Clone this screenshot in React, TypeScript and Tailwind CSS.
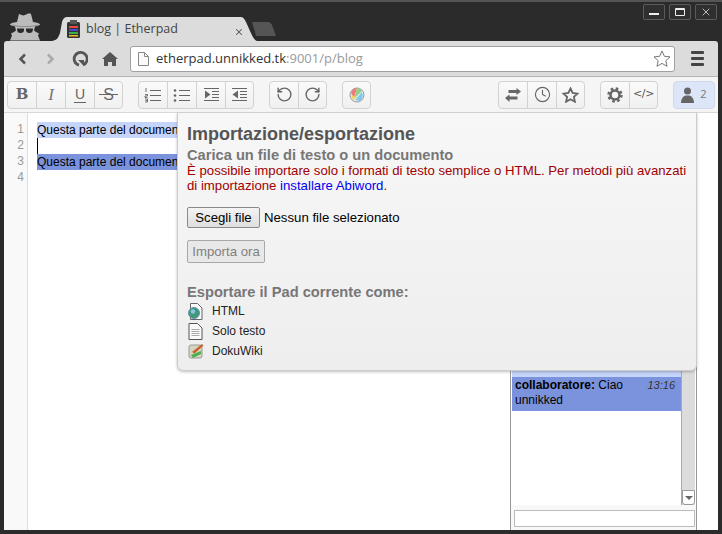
import { ReactNode } from "react";
import { RotateCcw, RotateCw, Clock, X } from "lucide-react";

const sans = "font-['Liberation_Sans',Arial,sans-serif]";

function ToolButton({ children, last }: { children: ReactNode; last?: boolean }) {
  return (
    <div
      className={`flex items-center justify-center h-full text-[#666] ${
        last ? "w-[27px]" : "w-[29px] border-r border-[#d2d2d2]"
      }`}
    >
      {children}
    </div>
  );
}

function ToolGroup({ children }: { children: ReactNode }) {
  return (
    <div className="flex h-[28px] rounded-[4px] border border-[#d2d2d2] bg-gradient-to-b from-[#fafafa] to-[#f0f0f0]">
      {children}
    </div>
  );
}

function ListIcon({ numbered }: { numbered?: boolean }) {
  return (
    <svg width="18" height="16" viewBox="0 0 18 16" fill="none" stroke="#666" strokeWidth="1">
      <path d="M6 3.500h11M6 8.500h11M6 13.500h11" />
      {numbered ? (
        <path d="M2 1v4M1 7.500h2.500v1.500h-2.500v1.500h2.500M1 12h2.500v3h-2.500M1.500 13.500h2" strokeWidth="0.9" />
      ) : (
        <g fill="#666" stroke="none">
          <circle cx="2" cy="3.500" r="1.300" />
          <circle cx="2" cy="8.500" r="1.300" />
          <circle cx="2" cy="13.500" r="1.300" />
        </g>
      )}
    </svg>
  );
}

function IndentIcon({ out }: { out?: boolean }) {
  return (
    <svg width="15" height="13" viewBox="0 0 15 13" fill="none" stroke="#666" strokeWidth="1">
      <path d="M0 .5h15M0 12.500h15M8 3.500h7M8 6.500h7M8 9.500h7" />
      <path d={out ? "M6 2.500v8l-5.500-4z" : "M1 2.500v8l5.500-4z"} fill="#666" stroke="none" />
    </svg>
  );
}

function FileIcon() {
  return (
    <svg width="11" height="14" viewBox="0 0 11 14" fill="#fafafa" stroke="#888" strokeWidth="1">
      <path d="M.5 .5h6l4 4v9h-10z" />
      <path d="M6.500 .5v4h4" fill="none" />
    </svg>
  );
}

function IncognitoIcon() {
  return (
    <svg width="34" height="28" viewBox="0 0 34 28" className="mt-[11px] ml-[4px] shrink-0">
      <path d="M9 9l2-8c3 1 4 2 6 1s4-2 6-1l2 8c4 .5 7 1.500 7 2.500 0 .8-2 1.500-5 2l-1 4c1 1 3 2 5 3l-1 2 2 5h-30l2-5-1-2c2-1 4-2 5-3l-1-4c-3-.5-5-1.200-5-2 0-1 3-2 7-2.500z" fill="#bcbcbc" />
      <path d="M9 15.500h7c.5 3-1 4.500-3.500 4.500s-3.500-1.500-3.500-4.500zM18 15.500h7c0 3-1 4.500-3.500 4.500s-4-1.500-3.500-4.500z" fill="#2b2b2b" />
      <path d="M4 11.500c8 2 18 2 26 0v1c-8 2-18 2-26 0z" fill="#8c8c8c" />
    </svg>
  );
}

function Tab() {
  return (
    <div className="relative w-[208px] h-[24px] flex items-center pl-[17px] mt-[15px] shrink-0">
      <svg width="208" height="24" viewBox="0 0 208 24" className="absolute left-0 top-0">
        <path d="M0 24c6 0 8-2 10-8l2-11c1-3 2-5 6-5h172c3 0 4 1 6 5l4 9c3 7 5 10 8 10z" fill="#dcdcdc" />
      </svg>
      <svg width="13" height="18" viewBox="0 0 13 18" className="relative mr-[6px]">
        <rect x="0" y="2" width="13" height="16" rx="1.500" fill="#333" />
        <rect x="3" y="0" width="7" height="4" fill="#555" />
        <rect x="2" y="6" width="9" height="2" fill="#e44" />
        <rect x="2" y="9" width="9" height="2" fill="#4a4ad0" />
        <rect x="2" y="12" width="9" height="2" fill="#3ab04a" />
        <rect x="2" y="15" width="9" height="1.500" fill="#e6c020" />
      </svg>
      <span className="relative text-[12.500px] text-[#444] font-['Open_Sans',sans-serif]">blog | Etherpad</span>
      <X size={10} strokeWidth={2.500} className="absolute left-[184px] top-[10px] text-[#555]" />
    </div>
  );
}

function WindowButton({ children }: { children: ReactNode }) {
  return (
    <div className="flex items-center justify-center w-[22px] h-[16px] rounded-[2px] border border-[#5c5c5c] bg-[#2f2f2f] text-[#eee]">
      {children}
    </div>
  );
}

function ExportRow({ icon, label }: { icon: ReactNode; label: string }) {
  return (
    <div className="flex items-center h-[20px]">
      <div className="w-[25px] flex justify-start shrink-0">{icon}</div>
      <span className="text-[12px] text-[#222]">{label}</span>
    </div>
  );
}

function ImportExportPopup() {
  return (
    <div className="absolute left-[173px] top-0 w-[520px] h-[258px] bg-gradient-to-b from-[#f7f7f7] to-[#eeeeee] border-x border-b border-[#cccccc] rounded-b-[6px] shadow-[0_1px_3px_rgba(0,0,0,.25)] pl-[9px] pt-[10px]">
      <h1 className="text-[18px] leading-[22px] font-bold text-[#555]">Importazione/esportazione</h1>
      <h2 className="text-[14.670px] leading-[18px] mt-[1px] font-bold text-[#777]">Carica un file di testo o un documento</h2>
      <p className="text-[13.200px] leading-[14.500px] text-[#a00000] whitespace-nowrap">
        È possibile importare solo i formati di testo semplice o HTML. Per metodi più avanzati
        <br />
        di importazione <span className="text-[#0000ee]">installare Abiword</span>.
      </p>
      <div className="flex items-center mt-[14px] text-[13.200px] text-black">
        <div className="flex items-center justify-center w-[73px] h-[21px] rounded-[2px] border border-[#8a8a8a] bg-gradient-to-b from-[#f4f4f4] to-[#dedede]">
          Scegli file
        </div>
        <span className="ml-[4px]">Nessun file selezionato</span>
      </div>
      <div className="flex items-center justify-center mt-[12px] w-[78px] h-[23px] rounded-[2px] border border-[#a8a8a8] bg-[#e8e8e8] text-[13.200px] text-[#808080]">
        Importa ora
      </div>
      <h2 className="text-[14.670px] leading-[18px] mt-[20px] font-bold text-[#777]">Esportare il Pad corrente come:</h2>
      <ExportRow
        icon={
          <svg width="16" height="17" viewBox="0 0 16 17" fill="#fafafa" stroke="#666">
            <path d="M3.500 .5h7l4.500 4.500v11.500h-11.500z" />
            <circle cx="7" cy="10" r="5.500" fill="#3f9a78" stroke="#6a8fb0" />
            <circle cx="6" cy="8.500" r="2.200" fill="#8fc6e8" stroke="none" />
          </svg>
        }
        label="HTML"
      />
      <ExportRow
        icon={
          <svg width="15" height="17" viewBox="0 0 15 17" fill="#fafafa" stroke="#555" className="ml-[1px]">
            <path d="M1 .5h8.500l4.500 4.500v11.500h-13z" />
            <path d="M3.500 6.500h8M3.500 8.500h8M3.500 10.500h8M3.500 12.500h8" stroke="#aaa" />
          </svg>
        }
        label="Solo testo"
      />
      <ExportRow
        icon={
          <svg width="17" height="16" viewBox="0 0 17 16" className="ml-[1px]">
            <rect x="1" y="2" width="13" height="13" rx="2" fill="#d8d4c0" stroke="#999" />
            <path d="M3 12l10-4v3l-8 4z" fill="#4caf50" />
            <path d="M4 9l10-8 1.500 1.500-9 8z" fill="#c8602c" />
          </svg>
        }
        label="DokuWiki"
      />
    </div>
  );
}

export default function App() {
  return (
    <div className={`relative w-[722px] h-[534px] overflow-hidden bg-[#2b2b2b] border-t-2 border-[#555] flex flex-col px-[4px] pb-[4px] ${sans}`}>
      {/* title strip */}
      <div className="flex h-[39px] shrink-0">
        <IncognitoIcon />
        <div className="w-[8px] shrink-0" />
        <Tab />
        <svg width="24" height="14" viewBox="0 0 24 14" className="mt-[20px] ml-[-6px] shrink-0">
          <path d="M0 0h16c2 0 3 1 4 3l4 11h-20c-1-5-3-10-4-14z" fill="#555" />
        </svg>
        <div className="ml-auto flex gap-[4px] mt-[2px] mr-[1px] h-[16px]">
          <WindowButton>
            <div className="w-[10px] h-[2px] bg-[#eee] mt-[3px]" />
          </WindowButton>
          <WindowButton>
            <div className="w-[10px] h-[8px] border border-[#eee] border-t-2 rounded-[1px]" />
          </WindowButton>
          <WindowButton>
            <X size={12} strokeWidth={1.500} />
          </WindowButton>
        </div>
      </div>

      {/* browser toolbar */}
      <div className="flex items-center h-[36px] shrink-0 bg-[#dcdcdc] rounded-t-[3px] border-b border-[#b4b4b4]">
        <svg width="10" height="12" viewBox="0 0 10 12" className="ml-[14px]" fill="none" stroke="#555" strokeWidth="2.500">
          <path d="M7 1.500l-4.500 4.500 4.500 4.500" />
        </svg>
        <svg width="10" height="12" viewBox="0 0 10 12" className="ml-[17px]" fill="none" stroke="#aaa" strokeWidth="2.500">
          <path d="M3 1.500l4.500 4.500-4.500 4.500" />
        </svg>
        <svg width="16" height="16" viewBox="0 0 16 16" className="ml-[17px]" fill="none" stroke="#555" strokeWidth="2.800">
          <path d="M11 14a6.500 6.500 0 1 0-4 .2" />
          <path d="M6 9l6 0 0 6z" fill="#555" stroke="none" />
        </svg>
        <svg width="16" height="14" viewBox="0 0 16 14" className="ml-[14px]" fill="#555">
          <path d="M8 0l8 7h-2v7h-4v-4h-4v4h-4v-7h-2z" />
        </svg>
        <div className="flex items-center w-[545px] h-[26px] ml-[12px] rounded-[3px] border border-[#a0a0a0] bg-white">
          <div className="ml-[7px] mr-[7px] flex">
            <FileIcon />
          </div>
          <span className="text-[13px] font-['Open_Sans',sans-serif] text-[#333] whitespace-nowrap">
            etherpad.unnikked.tk<span className="text-[#999]">:9001/p/blog</span>
          </span>
          <svg width="18" height="17" viewBox="0 0 18 17" className="ml-auto mr-[3px]" fill="#fff" stroke="#777">
            <path d="M9 1l2.400 5.300 5.600.6-4.200 3.800 1.200 5.600-5-2.900-5 2.900 1.200-5.600-4.200-3.800 5.600-.6z" />
          </svg>
        </div>
        <div className="ml-[16px] flex flex-col gap-[3px]">
          <div className="w-[13px] h-[3px] bg-[#444] rounded-[1px]" />
          <div className="w-[13px] h-[3px] bg-[#444] rounded-[1px]" />
          <div className="w-[13px] h-[3px] bg-[#444] rounded-[1px]" />
        </div>
      </div>

      {/* etherpad toolbar */}
      <div className="flex items-center gap-[15px] h-[36px] shrink-0 bg-[#f5f5f5] border-b border-[#d8d8d8] pl-[3px] pr-[3px]">
        <ToolGroup>
          <ToolButton><span className="font-['DejaVu_Serif',serif] font-bold text-[15px]">B</span></ToolButton>
          <ToolButton><span className="font-['Liberation_Serif',serif] italic text-[17px] text-[#777]">I</span></ToolButton>
          <ToolButton>
            <span className="font-['Liberation_Sans',sans-serif] text-[14px] leading-[15px] px-[1px] border-b border-[#666]">U</span>
          </ToolButton>
          <ToolButton last>
            <span className="relative font-['Liberation_Sans',sans-serif] text-[16px]">
              S
              <span className="absolute left-[-4px] right-[-4px] top-[11px] h-px bg-[#666]" />
            </span>
          </ToolButton>
        </ToolGroup>
        <ToolGroup>
          <ToolButton><ListIcon numbered /></ToolButton>
          <ToolButton><ListIcon /></ToolButton>
          <ToolButton><IndentIcon /></ToolButton>
          <ToolButton last><IndentIcon out /></ToolButton>
        </ToolGroup>
        <ToolGroup>
          <ToolButton><RotateCcw size={17} strokeWidth={2} /></ToolButton>
          <ToolButton last><RotateCw size={17} strokeWidth={2} /></ToolButton>
        </ToolGroup>
        <ToolGroup>
          <ToolButton last>
            <svg width="16" height="16" viewBox="0 0 16 16">
              <circle cx="8" cy="8" r="7" fill="#eee" stroke="#999" />
              <path d="M2 6a6.500 6.500 0 0 1 6-5l-3 10z" fill="#ef7a7a" />
              <path d="M8 1a7 7 0 0 1 5 3l-8 8z" fill="#8fd08f" />
              <path d="M13 5a7 7 0 0 1-2 9l-5-1z" fill="#7fc8ee" />
              <path d="M2 8a6 6 0 0 0 3 5l2-3z" fill="#f2d65c" />
            </svg>
          </ToolButton>
        </ToolGroup>
        <div className="flex-1" />
        <ToolGroup>
          <ToolButton>
            <svg width="16" height="14" viewBox="0 0 16 14" fill="#666">
              <path d="M16 3.500l-4.500-3.500v2h-8v3h8v2zM0 10l4.500-3.500v2h8v3h-8v2.500z" />
            </svg>
          </ToolButton>
          <ToolButton><Clock size={17} strokeWidth={1.600} /></ToolButton>
          <ToolButton last>
            <svg width="17" height="16" viewBox="0 0 17 16" fill="none" stroke="#666" strokeWidth="1.800">
              <path d="M8.500 1.500l2.100 4.500 4.900.6-3.600 3.300 1 4.800-4.400-2.500-4.400 2.500 1-4.800-3.600-3.300 4.900-.6z" />
            </svg>
          </ToolButton>
        </ToolGroup>
        <ToolGroup>
          <ToolButton>
            <svg width="16" height="16" viewBox="0 0 16 16" fill="none" stroke="#666">
              <circle cx="8" cy="8" r="4.500" strokeWidth="2.600" />
              <circle cx="8" cy="8" r="6.500" strokeWidth="2.400" strokeDasharray="2.550 2.550" />
            </svg>
          </ToolButton>
          <ToolButton last>
            <span className="text-[11px] text-[#555] font-['DejaVu_Sans',sans-serif] tracking-[-.03em]">&lt;/&gt;</span>
          </ToolButton>
        </ToolGroup>
        <div className="flex items-center gap-[6px] justify-center w-[42px] h-[28px] rounded-[4px] border border-[#d0d8ec] bg-[#dde5f8] text-[#666]">
          <svg width="13" height="16" viewBox="0 0 13 16" fill="#666">
            <circle cx="6.500" cy="4" r="3.500" />
            <path d="M0 16c0-4 2-7 5-7.500h3c3 .5 5 3.500 5 7.500z" />
          </svg>
          <span className="text-[11px] text-[#777] font-['Open_Sans',sans-serif]">2</span>
        </div>
      </div>

      {/* editor + chat */}
      <div className="relative flex flex-1 min-h-0 bg-white">
        <div className="w-[24px] shrink-0 border-r border-[#dddddd] pt-[8px] bg-[#f9f9f9] text-[12px] leading-[16px] text-[#999] text-right pr-[3px]">
          <div>1</div>
          <div>2</div>
          <div>3</div>
          <div>4</div>
        </div>
        <div className="flex-1 min-w-0 pt-[9px] pl-[9px] text-[12px] leading-[16px] text-black whitespace-nowrap">
          {/* the popup covers the rest of these lines, so they stop at its edge */}
          <div className="w-[140px] overflow-hidden bg-[#c5d4fb]">Questa parte del documento</div>
          <div className="w-px h-[16px] bg-black" />
          <div className="w-[140px] overflow-hidden bg-[#7b92dc]">Questa parte del documento</div>
        </div>

        {/* chat */}
        <div className="w-[187px] shrink-0 border-x border-[#999] mr-[21px] flex flex-col">
          <div className="flex flex-1 min-h-0">
            <div className="flex-1 min-w-0 pl-[1px] flex flex-col justify-end">
              <div className="h-[7px] bg-[#c5d4fb]" />
              <div className="h-[34px] bg-[#7b92dc] px-[3px] pt-[1px] text-[12px] leading-[15px] text-black relative">
                <b>collaboratore:</b> Ciao
                <br />
                unnikked
                <span className="absolute right-[6px] top-[1px] italic text-[11px] text-[#333]">13:16</span>
              </div>
              <div className="h-[94px]" />
            </div>
            <div className="w-[14px] shrink-0 mr-[1px] bg-[#dcdcdc] border-l border-[#aaa] flex flex-col justify-end">
              <div className="h-[15px] bg-white border border-[#999] rounded-b-[3px] flex items-center justify-center">
                <div className="w-0 h-0 border-x-[4px] border-x-transparent border-t-[4px] border-t-[#666]" />
              </div>
            </div>
          </div>
          <div className="h-[25px] shrink-0 bg-[#f8f8f8] pl-[3px] pr-[1px] pt-[5px]">
            <div className="h-[17px] border border-[#bbb] bg-white" />
          </div>
        </div>

        <ImportExportPopup />
      </div>
    </div>
  );
}
